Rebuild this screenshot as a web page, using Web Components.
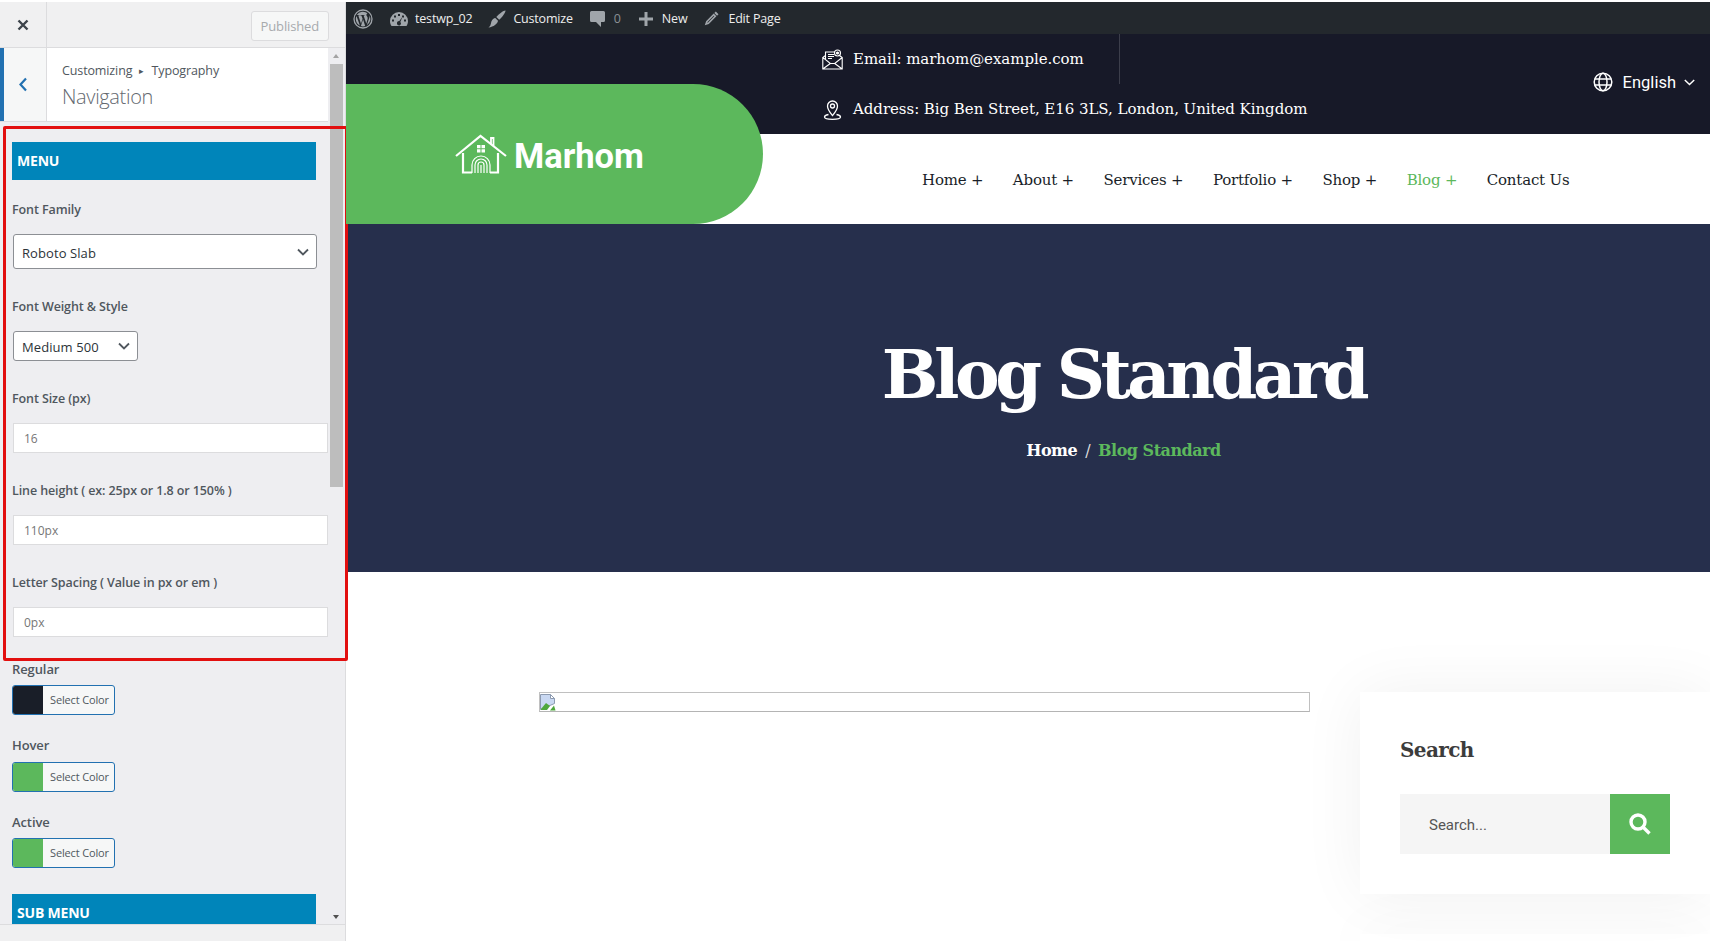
<!DOCTYPE html>
<html lang="en">
<head>
<meta charset="utf-8">
<title>Customizing Navigation</title>
<style>
html, body { margin: 0; height: 100%; overflow: hidden; background: #fff; }
body { display: flex; width: 1710px; height: 941px; padding-top: 2px; box-sizing: border-box; }
</style>
</head>
<body>
<customizer-panel></customizer-panel>
<site-preview></site-preview>

<script>
const UI_FONT = '"Open Sans", "Noto Sans", sans-serif';
const SLAB_FONT = '"DejaVu Serif", "Liberation Serif", serif';

class FieldBlock extends HTMLElement {
	constructor() {
		super();
		let kind = this.getAttribute('kind');
		let value = this.getAttribute('value');
		let control = kind == 'text'
			? `<div class="input">${value}</div>`
			: `<div class="select ${kind}"><span>${value}</span>
				<svg width="12" height="8" viewBox="0 0 12 8"><path d="M1 1.5l5 5 5-5" fill="none" stroke="#50575e" stroke-width="1.8"/></svg>
			</div>`;
		this.attachShadow({mode: 'open'}).innerHTML = `
			<style>
				:host { display: block; }
				.label { font: 600 12.5px/20px ${UI_FONT}; color: #50575e; letter-spacing: -.1px; }
				.select, .input { box-sizing: border-box; background: #fff; margin-top: 14px; }
				.select {
					display: flex;
					align-items: center;
					justify-content: space-between;
					margin-left: 1px;
					padding: 0 7px 0 8px;
					border: 1px solid #8c8f94;
					border-radius: 3px;
					font: 13px ${UI_FONT};
					letter-spacing: .08px;
					color: #2c3338;
				}
				.select span { padding-top: 2px; }
				.wide { width: 304px; height: 35px; }
				.small { width: 125px; height: 30px; }
				.input {
					margin-left: 1px;
					width: 315px;
					height: 30px;
					line-height: 29px;
					padding-left: 10px;
					border: 1px solid #dcdcde;
					font-family: ${UI_FONT};
					font-size: 12px;
					color: #767676;
				}
			</style>
			<div class="label">${this.getAttribute('label')}</div>
			${control}
		`;
	}
}
customElements.define('field-block', FieldBlock);

class ColorField extends HTMLElement {
	constructor() {
		super();
		this.attachShadow({mode: 'open'}).innerHTML = `
			<style>
				:host { display: block; }
				.label { font: 600 13px/20px ${UI_FONT}; color: #50575e; letter-spacing: -.1px; }
				.btn {
					display: flex;
					box-sizing: border-box;
					width: 103px;
					height: 30px;
					margin-top: var(--btn-gap, 6px);
					border: 1px solid #2271b1;
					border-radius: 3px;
					background: #f6f7f7;
					overflow: hidden;
				}
				.swatch { width: 30px; background: ${this.getAttribute('color')}; }
				.text { padding-left: 7px; font: 11px/28px ${UI_FONT}; color: #50575e; letter-spacing: -.15px; }
			</style>
			<div class="label">${this.getAttribute('label')}</div>
			<div class="btn"><span class="swatch"></span><span class="text">Select Color</span></div>
		`;
	}
}
customElements.define('color-field', ColorField);

class CustomizerPanel extends HTMLElement {
	constructor() {
		super();
		this.attachShadow({mode: 'open'}).innerHTML = `
			<style>
				:host {
					display: flex;
					flex-direction: column;
					position: relative;
					flex: none;
					box-sizing: border-box;
					width: 346px;
					height: 939px;
					background: #eeeef1;
					border-right: 1px solid #dcdcde;
				}
				.head { display: flex; flex: none; align-items: center; height: 45px; background: #f0f0f1; border-bottom: 1px solid #dcdcde; }
				.close { display: flex; align-items: center; justify-content: center; width: 47px; height: 100%; box-sizing: border-box; border-right: 1px solid #dcdcde; }
				.published {
					margin-left: auto;
					margin-right: 16px;
					margin-top: 2px;
					padding: 0 9px;
					height: 28px;
					border: 1px solid #dcdcde;
					border-radius: 3px;
					font: 13px/28px ${UI_FONT};
					color: #a7aaad;
					background: #f6f7f7;
					letter-spacing: -.15px;
				}
				.body { flex: 1; display: flex; min-height: 0; }
				.scroll { flex: 1; min-width: 0; height: 877px; overflow: hidden; }
				.crumbs { display: flex; height: 74px; background: #fff; border-bottom: 1px solid #dcdcde; box-sizing: border-box; }
				.back { display: flex; align-items: center; justify-content: center; width: 47px; box-sizing: border-box; padding-right: 4px; border-left: 4px solid #2271b1; border-right: 1px solid #dcdcde; background: #f6f7f7; }
				.titles { padding: 13px 0 0 15px; }
				.trail { font: 12.5px/20px ${UI_FONT}; color: #50575e; letter-spacing: -.12px; }
				.trail i { font-style: normal; font-size: 9px; vertical-align: 1px; padding: 0 4px; }
				.name { font: 300 20px/28px ${UI_FONT}; color: #646970; margin-top: 2px; letter-spacing: -.35px; }
				.section { padding: 20px 0 0 12px; }
				.bar { width: 304px; box-sizing: border-box; background: #0085ba; color: #fff; font: 700 14px/38px ${UI_FONT}; padding-left: 5px; letter-spacing: -.2px; }
				.f1 { margin-top: 20px; }
				.f2, .f3, .f4, .f5 { margin-top: 28px; }
				.c1 { margin-top: 22px; }
				.c2 { margin-top: 20px; --btn-gap: 7px; }
				.c3 { margin-top: 20px; }
				.bar.sub { margin-top: 26px; }
				.track { position: relative; flex: none; width: 17px; height: 877px; }
				.thumb { position: absolute; left: 2px; top: 16px; width: 13px; height: 423px; background: #bdbdbd; }
				.up, .down { position: absolute; left: 5px; border-left: 3.5px solid transparent; border-right: 3.5px solid transparent; }
				.up { top: 6px; border-bottom: 4px solid #a3a3a3; }
				.down { bottom: 6px; border-top: 4px solid #505050; }
				.foot { position: absolute; left: 0; right: 0; bottom: 0; height: 16px; background: #f0f0f1; border-top: 1px solid #dcdcde; }
				.mark { position: absolute; left: 3px; top: 124px; width: 345px; height: 535px; box-sizing: border-box; border: 3px solid #e20f0f; border-radius: 2px; pointer-events: none; }
			</style>
			<div class="head">
				<div class="close"><svg width="12" height="12" viewBox="0 0 12 12"><path d="M1.5 1.5l9 9M10.500 1.500l-9 9" stroke="#3c434a" stroke-width="2.4"/></svg></div>
				<div class="published">Published</div>
			</div>
			<div class="body">
				<div class="scroll">
					<div class="crumbs">
						<div class="back"><svg width="10" height="15" viewBox="0 0 10 15"><path d="M8 1.500L2.500 7.500 8 13.500" fill="none" stroke="#2271b1" stroke-width="2.2"/></svg></div>
						<div class="titles">
							<div class="trail">Customizing <i>▸</i> Typography</div>
							<div class="name">Navigation</div>
						</div>
					</div>
					<div class="section">
						<div class="bar">MENU</div>
						<field-block class="f1" kind="wide" label="Font Family" value="Roboto Slab"></field-block>
						<field-block class="f2" kind="small" label="Font Weight &amp; Style" value="Medium 500"></field-block>
						<field-block class="f3" kind="text" label="Font Size (px)" value="16"></field-block>
						<field-block class="f4" kind="text" label="Line height ( ex: 25px or 1.8 or 150% )" value="110px"></field-block>
						<field-block class="f5" kind="text" label="Letter Spacing ( Value in px or em )" value="0px"></field-block>
						<color-field class="c1" label="Regular" color="#191e28"></color-field>
						<color-field class="c2" label="Hover" color="#5cb85c"></color-field>
						<color-field class="c3" label="Active" color="#5cb85c"></color-field>
						<div class="bar sub">SUB MENU</div>
					</div>
				</div>
				<div class="track"><span class="up"></span><span class="thumb"></span><span class="down"></span></div>
			</div>
			<div class="foot"></div>
			<div class="mark"></div>
		`;
	}
}
customElements.define('customizer-panel', CustomizerPanel);

class AdminBar extends HTMLElement {
	constructor() {
		super();
		this.attachShadow({mode: 'open'}).innerHTML = `
			<style>
				:host { display: flex; align-items: center; box-sizing: border-box; height: 32px; padding: 1px 0 0 7px; background: #23282d; color: #eee; font: 12.5px/30px ${UI_FONT}; letter-spacing: -.18px; }
				svg { flex: none; fill: #a0a5aa; }
				span { white-space: nowrap; }
				.zero { color: #8b9095; }
			</style>
			<svg width="20" height="20" viewBox="0 0 20 20" style="margin-right:17px">
				<circle cx="10" cy="10" r="9" fill="none" stroke="#a0a5aa" stroke-width="1.3"/>
				<path d="M2.800 10c0 2.900 1.700 5.300 4.100 6.500L3.500 7.100A7.200 7.200 0 0 0 2.800 10zm11.900-.4c0-.9-.3-1.500-.6-2-.4-.6-.7-1.100-.7-1.700 0-.7.500-1.300 1.200-1.300h.1a7.200 7.200 0 0 0-10.900 1.400h.5c.8 0 1.900-.1 1.900-.1.400 0 .4.500 0 .6l-.9.100 2.700 8.100 1.600-4.900-1.200-3.200-.8-.1c-.4 0-.3-.6 0-.6 0 0 1.200.1 1.900.1.800 0 1.900-.1 1.900-.1.400 0 .4.500 0 .6l-.8.100 2.700 8 .7-2.500c.4-1 .6-1.800.6-2.500zm-4.600 1l-2.200 6.500a7.200 7.200 0 0 0 4.400-.1l-.1-.1zm6.300-4.200c0 .3.100.5.100.8 0 .7-.1 1.500-.5 2.600l-2.200 6.400a7.200 7.200 0 0 0 2.600-9.800z"/>
			</svg>
			<svg width="18" height="14" viewBox="0 0 18 14" style="margin-right:7px">
				<path fill-rule="evenodd" d="M9 0a9 9 0 0 0-9 9c0 2 .6 3.600 1.500 5h15c.9-1.400 1.500-3 1.500-5a9 9 0 0 0-9-9zM8 2h2v2H8zM4 3.500h2v2H4zM12 3.500h2v2h-2zM2 7.500h2v2H2zM14 7.500h2v2h-2zM12.500 4.800L10.300 10a2 2 0 1 1-3.300 1.200A2 2 0 0 1 9.300 9z"/>
			</svg>
			<span style="margin-right:16px">testwp_02</span>
			<svg width="18" height="18" viewBox="0 0 18 18" style="margin-right:7px">
				<path d="M17.500.500c.3 1.700-3.300 6.800-6.300 9.200L8.300 7C10.800 4 15.800.200 17.500.500zM7.300 8l2.700 2.800c-.5 3-4.300 6.200-9.500 6.700 2.500-1.500 2.200-4 3-6.200.8-2 2.300-3 3.800-3.300z"/>
			</svg>
			<span style="margin-right:17px">Customize</span>
			<svg width="15" height="16" viewBox="0 0 15 16" style="margin-right:9px">
				<path d="M1.500 0h12A1.500 1.500 0 0 1 15 1.500v8a1.500 1.500 0 0 1-1.500 1.500H11v5l-5-5H1.500A1.500 1.500 0 0 1 0 9.500v-8A1.500 1.500 0 0 1 1.500 0z"/>
			</svg>
			<span class="zero" style="margin-right:18px">0</span>
			<svg width="14" height="14" viewBox="0 0 14 14" style="margin-right:9px"><path d="M5.500 0h3v5.500H14v3H8.500V14h-3V8.500H0v-3h5.500z"/></svg>
			<span style="margin-right:17px">New</span>
			<svg width="15" height="15" viewBox="0 0 15 15" style="margin-right:9px">
				<path d="M11.800.500l2.700 2.700-1.500 1.500-2.700-2.700zM9.700 2.600l2.700 2.700-7.600 7.600L.8 14.200 2.100 10.200zM3.300 11.200l.5.500 6.400-6.400-.5-.5z" fill-rule="evenodd"/>
			</svg>
			<span>Edit Page</span>
		`;
	}
}
customElements.define('admin-bar', AdminBar);

class ContactLine extends HTMLElement {
	constructor() {
		super();
		this.attachShadow({mode: 'open'}).innerHTML = `
			<style>
				:host { display: flex; align-items: center; height: 50px; gap: 10px; color: #fff; font: 15px ${SLAB_FONT}; letter-spacing: -.05px; white-space: nowrap; }
				::slotted(svg) { flex: none; }
			</style>
			<slot name="icon"></slot><slot></slot>
		`;
	}
}
customElements.define('contact-line', ContactLine);

class SiteHeader extends HTMLElement {
	constructor() {
		super();
		let items = ['Home +', 'About +', 'Services +', 'Portfolio +', 'Shop +', 'Blog +', 'Contact Us'];
		this.attachShadow({mode: 'open'}).innerHTML = `
			<style>
				:host { display: block; position: relative; height: 190px; background: #fff; }
				.top { display: flex; height: 100px; background: #171928; }
				.contacts { margin-left: 476px; width: 297px; position: relative; }
				.contacts::after { content: ""; position: absolute; left: 297px; top: 0; width: 1px; height: 50px; background: #3c3e4b; }
				.lang { display: flex; align-items: center; gap: 10px; margin-left: auto; margin-right: 15px; margin-bottom: 4px; color: #fff; font: 16.5px Roboto, sans-serif; }
				.logo {
					position: absolute;
					left: 0;
					top: 50px;
					display: flex;
					align-items: center;
					box-sizing: border-box;
					width: 417px;
					height: 140px;
					padding: 0 0 0 109px;
					gap: 7px;
					background: #5cb85c;
					border-radius: 0 70px 70px 0;
					color: #fff;
					font: 700 34.5px Roboto, sans-serif;
				}
				.logo span { padding-top: 4px; }
				nav { display: flex; height: 90px; align-items: center; box-sizing: border-box; padding-top: 2px; margin-left: 576px; gap: 29.5px; font: 15px ${SLAB_FONT}; letter-spacing: -.2px; color: #191e28; white-space: nowrap; }
				nav .on { color: #5cb85c; }
			</style>
			<div class="top">
				<div class="contacts">
					<contact-line>
						<svg slot="icon" width="21" height="21" viewBox="0 0 21 21" fill="none" stroke="#fff" stroke-width="1.100">
							<path d="M.8 8.500V20h19.400V8.500L17.500 6.500M3.500 6.500L.8 8.500l7.500 6h4.400l7.500-6M.8 20l7.500-5.500M20.200 20l-7.500-5.500"/>
							<path d="M3.500 10V3H13M6 5.500h6M6 7.500h6M6 9.500h4"/>
							<circle cx="15.500" cy="4" r="3"/><circle cx="15.500" cy="4" r="1" fill="#fff"/>
						</svg>
						Email: marhom@example.com
					</contact-line>
					<contact-line>
						<svg slot="icon" width="21" height="21" viewBox="0 0 21 21" fill="none" stroke="#fff" stroke-width="1.300">
							<path d="M10.500 16.500C8 13.500 5.500 10.700 5.500 7a5 5 0 0 1 10 0c0 3.700-2.500 6.500-5 9.500z"/>
							<circle cx="10.500" cy="7" r="2"/>
							<path d="M6.500 15.500C4 16 2.500 17 2.500 18c0 1.500 3.500 2.300 8 2.300s8-.8 8-2.300c0-1-1.500-2-4-2.500"/>
						</svg>
						Address: Big Ben Street, E16 3LS, London, United Kingdom
					</contact-line>
				</div>
				<div class="lang">
					<svg width="20" height="20" viewBox="0 0 20 20" fill="none" stroke="#fff" stroke-width="1.500">
						<circle cx="10" cy="10" r="8.800"/><ellipse cx="10" cy="10" rx="4" ry="8.800"/><path d="M1.800 7h16.400M1.800 13h16.400"/>
					</svg>
					<span>English</span>
					<svg width="11" height="7" viewBox="0 0 11 7" style="margin-left:-2px"><path d="M.8 1l4.700 4.500L10.200 1" fill="none" stroke="#fff" stroke-width="1.500"/></svg>
				</div>
			</div>
			<div class="logo">
				<svg width="52" height="40" viewBox="0 0 52 40" fill="none" stroke="#fff" stroke-width="2.200" style="flex:none">
					<path d="M1 22L25.500 2 51 22"/>
					<path d="M36 10V4h2.500v8" stroke-width="1.800"/>
					<path d="M8 19v19.500h9M43 19v19.500h-8"/>
					<path d="M17 39V31a9 9 0 0 1 18 0v8M20 39V31a6 6 0 0 1 12 0v8M23 39V31a3 3 0 0 1 6 0v8M26 39v-8" stroke-width="1.200"/>
					<path d="M22 11h3.500v3.200H22zM26.500 11H30v3.200h-3.500zM22 15.200h3.500v3.200H22zM26.500 15.200H30v3.200h-3.500z" fill="#fff" stroke="none"/>
				</svg>
				<span>Marhom</span>
			</div>
			<nav>${items.map(i => `<span class="${i == 'Blog +' ? 'on' : ''}">${i}</span>`).join('')}</nav>
		`;
	}
}
customElements.define('site-header', SiteHeader);

class PageHero extends HTMLElement {
	constructor() {
		super();
		this.attachShadow({mode: 'open'}).innerHTML = `
			<style>
				:host { display: flex; flex-direction: column; align-items: center; height: 348px; background: #262f4c; color: #fff; box-sizing: border-box; padding: 109px 0 0 191px; }
				h1 { margin: 0; font: 700 67px/84px ${SLAB_FONT}; letter-spacing: -4.4px; white-space: nowrap; }
				.path { margin-top: 22px; font: 700 16px/24px ${SLAB_FONT}; letter-spacing: -.5px; white-space: nowrap; }
				.path i { font-style: normal; font-weight: 400; padding: 0 8px; color: #ddd; }
				.path b { color: #5cb85c; }
			</style>
			<h1>Blog Standard</h1>
			<div class="path">Home<i>/</i><b>Blog Standard</b></div>
		`;
	}
}
customElements.define('page-hero', PageHero);

class BlogArea extends HTMLElement {
	constructor() {
		super();
		this.attachShadow({mode: 'open'}).innerHTML = `
			<style>
				:host { display: flex; flex: 1; min-height: 0; padding: 120px 0 0 193px; background: #fff; overflow: hidden; }
				.broken { position: relative; flex: none; box-sizing: border-box; width: 771px; height: 20px; border: 1px solid #c0c0c0; border-bottom-color: #b4b4b4; }
				.broken svg { position: absolute; left: 0; top: 1px; }
				aside { margin-left: 50px; flex: 1; min-width: 0; }
				.card { position: relative; z-index: 1; box-sizing: border-box; height: 202px; padding: 44px 40px 0; background: #fff; box-shadow: 0 0 60px rgba(0,0,0,.06); }
				h3 { margin: 0; font: 700 20px/28px ${SLAB_FONT}; color: #3c3c3c; letter-spacing: -.6px; }
				.search { display: flex; height: 60px; margin-top: 30px; }
				.field { width: 210px; box-sizing: border-box; padding-left: 29px; background: #f5f5f5; font: 15px/62px Roboto, sans-serif; color: #555; }
				.go { display: flex; align-items: center; justify-content: center; width: 60px; background: #5cb85c; }
				.next { height: 20px; margin-top: 40px; background: #fff; box-shadow: 0 0 60px rgba(0,0,0,.06); }
			</style>
			<div class="broken">
				<svg width="16" height="17" viewBox="0 0 16 17">
					<path d="M.5.500h10l4 4v5L.5 15.500z" fill="#c9d8f2" stroke="#8c9ab0"/>
					<path d="M10.500.500v4h4z" fill="#fff" stroke="#8c9ab0"/>
					<path d="M1 15l5-6 4 3-3 4H1z" fill="#4fa83d"/>
					<path d="M10 16.500l4-5 1.500 5z" fill="#4fa83d"/>
				</svg>
			</div>
			<aside>
				<div class="card">
					<h3>Search</h3>
					<div class="search">
						<div class="field">Search...</div>
						<div class="go">
							<svg width="22" height="22" viewBox="0 0 22 22" fill="none" stroke="#fff" stroke-width="3.400"><circle cx="9" cy="9" r="7"/><path d="M14 14l6.500 6.500"/></svg>
						</div>
					</div>
				</div>
				<div class="next"></div>
			</aside>
		`;
	}
}
customElements.define('blog-area', BlogArea);

class SitePreview extends HTMLElement {
	constructor() {
		super();
		this.attachShadow({mode: 'open'}).innerHTML = `
			<style>
				:host { display: flex; flex-direction: column; flex: 1; min-width: 0; height: 939px; overflow: hidden; }
			</style>
			<admin-bar></admin-bar>
			<site-header></site-header>
			<page-hero></page-hero>
			<blog-area></blog-area>
		`;
	}
}
customElements.define('site-preview', SitePreview);
</script>
</body>
</html>
